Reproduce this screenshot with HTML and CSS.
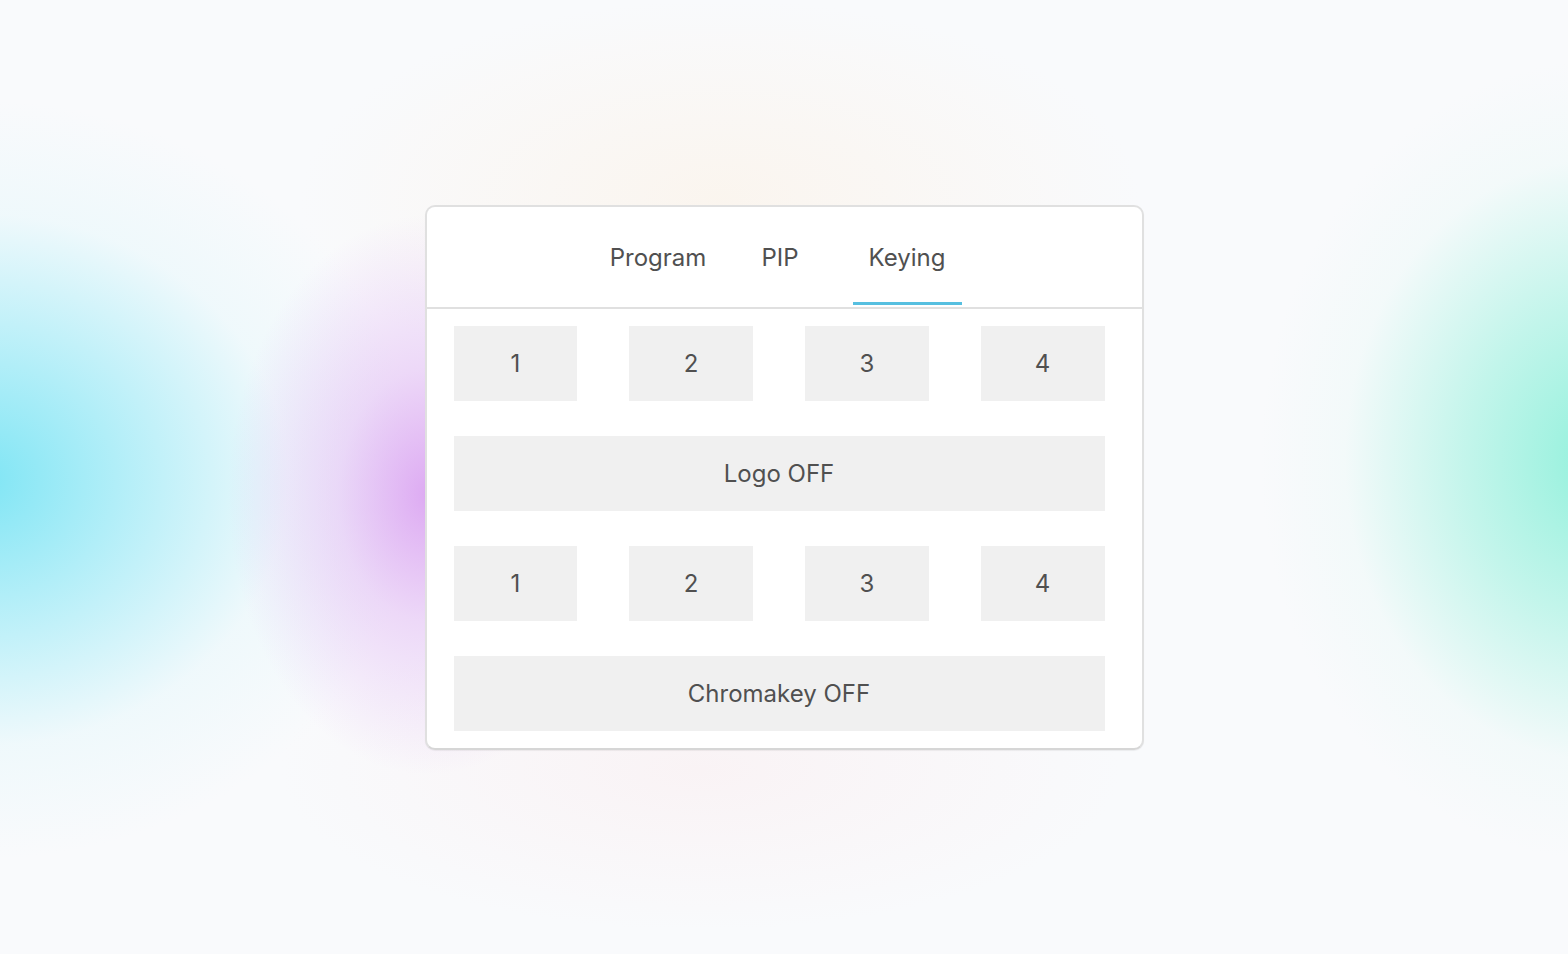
FILE: index.html
```html
<!DOCTYPE html>
<html lang="en">
<head>
<meta charset="utf-8">
<title>Keying</title>
<link rel="stylesheet" href="styles.css">
</head>
<body>
<main class="stage">
  <section class="card">
    <nav class="tabs">
      <div class="tab tab-program">Program</div>
      <div class="tab tab-pip">PIP</div>
      <div class="tab tab-keying active">Keying</div>
    </nav>
    <div class="panel">
      <div class="row-4">
        <div class="btn">1</div>
        <div class="btn">2</div>
        <div class="btn">3</div>
        <div class="btn">4</div>
      </div>
      <div class="btn wide">Logo OFF</div>
      <div class="row-4">
        <div class="btn">1</div>
        <div class="btn">2</div>
        <div class="btn">3</div>
        <div class="btn">4</div>
      </div>
      <div class="btn wide">Chromakey OFF</div>
    </div>
  </section>
</main>
</body>
</html>
```
FILE: styles.css
```css
html, body {
  margin: 0;
  padding: 0;
  height: 100%;
}
body {
  font-family: Inter, "Liberation Sans", sans-serif;
  background-color: #f9fafc;
  background-image:
    radial-gradient(ellipse 200px 280px at 428px 495px, rgba(214, 150, 240, 0.8) 0%, rgba(220, 170, 242, 0.42) 45%, rgba(236, 215, 248, 0) 100%),
    radial-gradient(ellipse 440px 380px at -20px 480px, rgba(120, 228, 244, 0.95) 0%, rgba(140, 232, 246, 0.6) 35%, rgba(200, 244, 250, 0.2) 70%, rgba(249, 250, 252, 0) 100%),
    radial-gradient(ellipse 340px 400px at 1600px 460px, rgba(140, 240, 218, 0.95) 0%, rgba(160, 242, 224, 0.6) 40%, rgba(215, 248, 240, 0.18) 75%, rgba(249, 250, 252, 0) 100%),
    radial-gradient(ellipse 420px 200px at 720px 200px, rgba(252, 240, 225, 0.5) 0%, rgba(249, 250, 252, 0) 100%),
    radial-gradient(ellipse 420px 160px at 700px 770px, rgba(250, 236, 238, 0.5) 0%, rgba(249, 250, 252, 0) 100%);
  background-repeat: no-repeat;
}
.stage {
  height: 100vh;
  display: flex;
  align-items: center;
  justify-content: center;
}
.card {
  width: 715px;
  background: #ffffff;
  border: 2px solid #e0e0e0;
  border-bottom-color: #d6d6d6;
  border-radius: 10px;
  box-shadow: 0 1px 1px rgba(0, 0, 0, 0.06);
}
.tabs {
  height: 100px;
  display: flex;
  align-items: stretch;
  border-bottom: 2px solid #e0e0e0;
  padding-left: 166px;
}
.tab {
  display: flex;
  align-items: center;
  justify-content: center;
  font-size: 24px;
  color: #505050;
  box-sizing: border-box;
  padding-top: 6px;
  border-bottom: 3px solid transparent;
  margin-bottom: 2px;
}
.tab-program {
  width: 131px;
}
.tab-pip {
  width: 85px;
  margin-left: 14px;
}
.tab-keying {
  width: 109px;
  margin-left: 30px;
}
.tab.active {
  border-bottom-color: #56bfe0;
}
.panel {
  padding: 17px 37px 17px 27px;
  display: flex;
  flex-direction: column;
  gap: 35px;
}
.row-4 {
  display: grid;
  grid-template-columns: repeat(4, 1fr);
  column-gap: 52px;
}
.btn {
  height: 75px;
  background: #f0f0f0;
  display: flex;
  align-items: center;
  justify-content: center;
  font-size: 24px;
  color: #505050;
}
```
